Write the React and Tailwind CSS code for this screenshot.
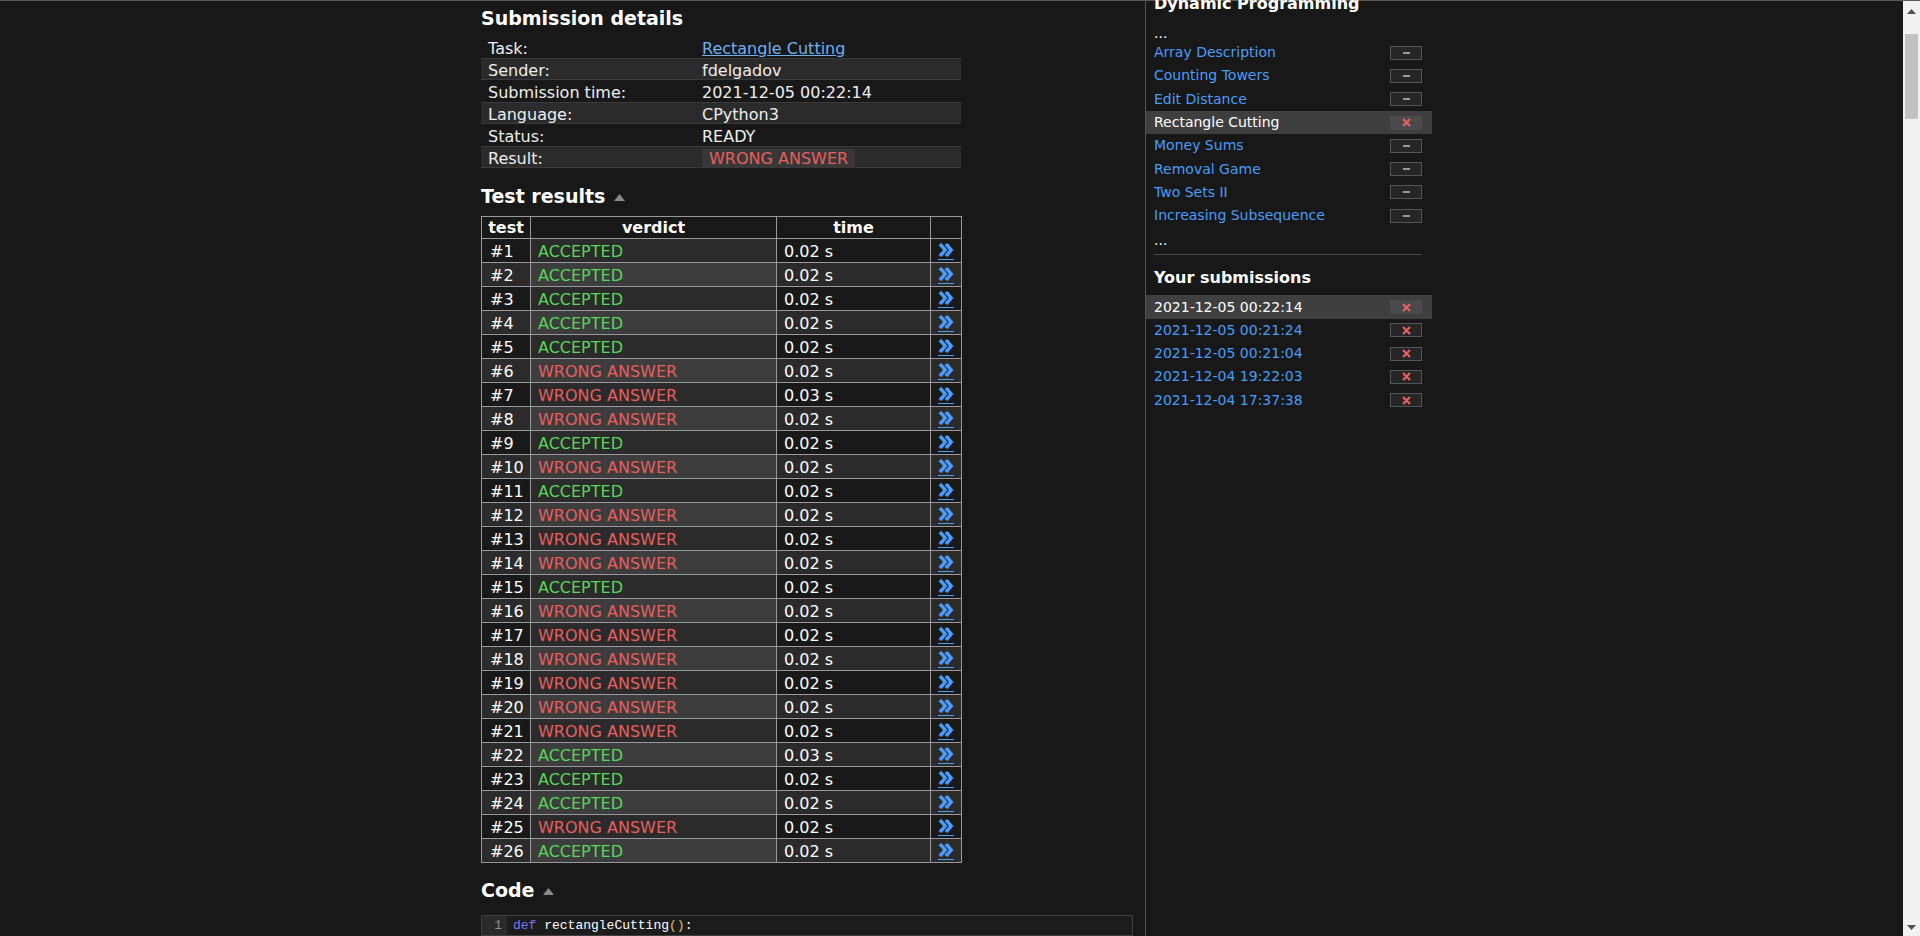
import React from "react";

const tests = [
  ["A", "0.02"], ["A", "0.02"], ["A", "0.02"], ["A", "0.02"], ["A", "0.02"],
  ["W", "0.02"], ["W", "0.03"], ["W", "0.02"], ["A", "0.02"], ["W", "0.02"],
  ["A", "0.02"], ["W", "0.02"], ["W", "0.02"], ["W", "0.02"], ["A", "0.02"],
  ["W", "0.02"], ["W", "0.02"], ["W", "0.02"], ["W", "0.02"], ["W", "0.02"],
  ["W", "0.02"], ["A", "0.03"], ["A", "0.02"], ["A", "0.02"], ["W", "0.02"],
  ["A", "0.02"],
];

const tasks = [
  "Array Description",
  "Counting Towers",
  "Edit Distance",
  "Rectangle Cutting",
  "Money Sums",
  "Removal Game",
  "Two Sets II",
  "Increasing Subsequence",
];

const subs = [
  "2021-12-05 00:22:14",
  "2021-12-05 00:21:24",
  "2021-12-05 00:21:04",
  "2021-12-04 19:22:03",
  "2021-12-04 17:37:38",
];

function UpTri() {
  return (
    <svg width="11" height="7" viewBox="0 0 11 7" className="ml-[9px] mt-[2px]">
      <path d="M5.5 0 L11 7 L0 7 Z" fill="#8a8a8a" />
    </svg>
  );
}

function Chevrons() {
  return (
    <span className="flex flex-col items-center">
      <svg width="16" height="14" viewBox="0 0 16 14">
        <path d="M0.5 2 L3.5 0 L9.5 7 L3.5 14 L0.5 12 L5 7 Z" fill="#4a9df8" />
        <path d="M6.5 2 L9.5 0 L15.5 7 L9.5 14 L6.5 12 L11 7 Z" fill="#4a9df8" />
      </svg>
      <span className="block w-[16px] h-[1px] bg-[#4a9df8] mt-[2px]" />
    </span>
  );
}

function Minus({ active }) {
  return (
    <span className={"w-[32px] h-[14px] flex items-center justify-center " + (active ? "bg-[#4a4a4a]" : "bg-[#262626] border border-[#555555]")}>
      <span className="block w-[7px] h-[2px] bg-[#9a9a9a]" />
    </span>
  );
}

function Cross({ active }) {
  return (
    <span className={"w-[32px] h-[14px] flex items-center justify-center " + (active ? "bg-[#4a4a4a]" : "bg-[#262626] border border-[#555555]")}>
      <svg width="9" height="9" viewBox="0 0 9 9">
        <path d="M1 1 L8 8 M8 1 L1 8" stroke="#e86060" strokeWidth="2.2" />
      </svg>
    </span>
  );
}

export default function App() {
  const details = [
    ["Task:", "link"],
    ["Sender:", "fdelgadov"],
    ["Submission time:", "2021-12-05 00:22:14"],
    ["Language:", "CPython3"],
    ["Status:", "READY"],
    ["Result:", "badge"],
  ];
  return (
    <div className="w-[1920px] h-[936px] overflow-hidden bg-[#181818] flex flex-col font-['DejaVu_Sans',sans-serif] text-[#eeeeee]">
      <div className="h-[1px] bg-[#5a5a5a] shrink-0" />
      <div className="flex flex-1 min-h-0">
        <div className="flex-1 flex pl-[481px] min-w-0">
          {/* main column */}
          <div className="w-[664px] shrink-0 flex flex-col">
            <div className="h-[35px] flex items-center text-[19px] font-bold text-white">Submission details</div>
            <div className="w-[480px] flex flex-col text-[16px] leading-[19px]">
              {details.map(([label, val], i) => (
                <div
                  key={label}
                  className={"h-[22px] flex items-center pt-[3px] " + (i % 2 === 1 ? "bg-[#2b2b2b] border-y border-[#3a3a3a]" : "")}
                >
                  <div className="w-[214px] pl-[7px]">{label}</div>
                  <div className="flex-1 pl-[7px]">
                    {val === "link" ? (
                      <span className="text-[#6eb0f0] underline">Rectangle Cutting</span>
                    ) : val === "badge" ? (
                      <span className="inline-block bg-[#383838] text-[#e85f5f] px-[7px] rounded-[2px] leading-[19px]">WRONG ANSWER</span>
                    ) : (
                      val
                    )}
                  </div>
                </div>
              ))}
            </div>

            <div className="h-[48px] pt-[8px] flex items-center text-[19px] font-bold text-white">
              Test results
              <UpTri />
            </div>

            <div className="w-[481px] border-l border-t border-[#999999] text-[16px] leading-[18px]">
              <div className="grid grid-cols-[49px_246px_154px_31px] grid-rows-[22px] h-[22px] font-bold text-[16px] text-white">
                <div className="border-r border-b border-[#999999] flex items-center justify-center pt-[1px]">test</div>
                <div className="border-r border-b border-[#999999] flex items-center justify-center pt-[1px]">verdict</div>
                <div className="border-r border-b border-[#999999] flex items-center justify-center pt-[1px]">time</div>
                <div className="border-r border-b border-[#999999]" />
              </div>
              {tests.map(([v, t], i) => {
                const even = i % 2 === 1;
                const base = even ? "bg-[#2b2b2b]" : "bg-[#191919]";
                const mid = even ? "bg-[#3d3d3d]" : "bg-[#2b2b2b]";
                return (
                  <div key={i} className="grid grid-cols-[49px_246px_154px_31px] grid-rows-[24px] h-[24px]">
                    <div className={"border-r border-b border-[#999999] flex items-center pl-[8px] pt-[3px] text-white " + base}>#{i + 1}</div>
                    <div className={"border-r border-b border-[#999999] flex items-center pl-[7px] pt-[3px] " + mid + (v === "A" ? " text-[#58d758]" : " text-[#e85f5f]")}>
                      {v === "A" ? "ACCEPTED" : "WRONG ANSWER"}
                    </div>
                    <div className={"border-r border-b border-[#999999] flex items-center pl-[7px] pt-[3px] text-white " + base}>{t} s</div>
                    <div className={"border-r border-b border-[#999999] flex items-center justify-center pt-[2px] " + base}>
                      <Chevrons />
                    </div>
                  </div>
                );
              })}
            </div>

            <div className="h-[52px] pt-[2px] flex items-center text-[19px] font-bold text-white">
              Code
              <UpTri />
            </div>

            <div className="w-[652px] flex-1 border border-[#3f3f3f] bg-[#1c1c1c] flex font-['Liberation_Mono',monospace] text-[13px]">
              <div className="w-[25px] bg-[#2a2a2a] text-[#8a8a8a] text-right pr-[5px] leading-[19px]">1</div>
              <div className="pl-[6px] leading-[19px]">
                <span className="text-[#7878f0]">def</span>
                <span className="text-white"> rectangleCutting</span>
                <span className="text-[#e0c060]">()</span>
                <span className="text-white">:</span>
              </div>
            </div>
          </div>

          {/* sidebar */}
          <div className="w-[287px] shrink-0 border-l border-[#555555] flex flex-col text-[14px]">
            <div className="-mt-[8px] h-[21px] leading-[21px] pl-[8px] text-[16px] font-bold text-white">Dynamic Programming</div>
            <div className="h-[27px] flex items-end pl-[8px] leading-[15px] text-white">...</div>
            {tasks.map((t) => {
              const active = t === "Rectangle Cutting";
              return (
                <div key={t} className={"h-[23.3px] flex items-center justify-between pl-[8px] pr-[10px] " + (active ? "bg-[#3f3f3f] text-white" : "text-[#4a9df8]")}>
                  <span>{t}</span>
                  {active ? <Cross active /> : <Minus />}
                </div>
              );
            })}
            <div className="h-[23px] pt-[3px] leading-[20px] pl-[8px] text-white">...</div>
            <div className="mt-[4px] ml-[8px] mr-[10px] h-[1px] bg-[#4a4a4a]" />
            <div className="h-[40px] pt-[6px] flex items-center pl-[8px] text-[16px] font-bold text-white">Your submissions</div>
            {subs.map((s, i) => (
              <div key={s} className={"h-[23.3px] flex items-center justify-between pl-[8px] pr-[10px] " + (i === 0 ? "bg-[#3f3f3f] text-white" : "text-[#4a9df8]")}>
                <span>{s}</span>
                <Cross active={i === 0} />
              </div>
            ))}
          </div>
        </div>

        {/* fake scrollbar */}
        <div className="w-[17px] shrink-0 bg-[#f1f1f1] flex flex-col items-center">
          <svg width="9" height="5" viewBox="0 0 9 5" className="mt-[8px]">
            <path d="M4.5 0 L9 5 L0 5 Z" fill="#505050" />
          </svg>
          <div className="mt-[20px] w-[13px] h-[85px] bg-[#c1c1c1]" />
          <div className="flex-1" />
          <svg width="9" height="5" viewBox="0 0 9 5" className="mb-[6px]">
            <path d="M0 0 L9 0 L4.5 5 Z" fill="#505050" />
          </svg>
        </div>
      </div>
    </div>
  );
}
